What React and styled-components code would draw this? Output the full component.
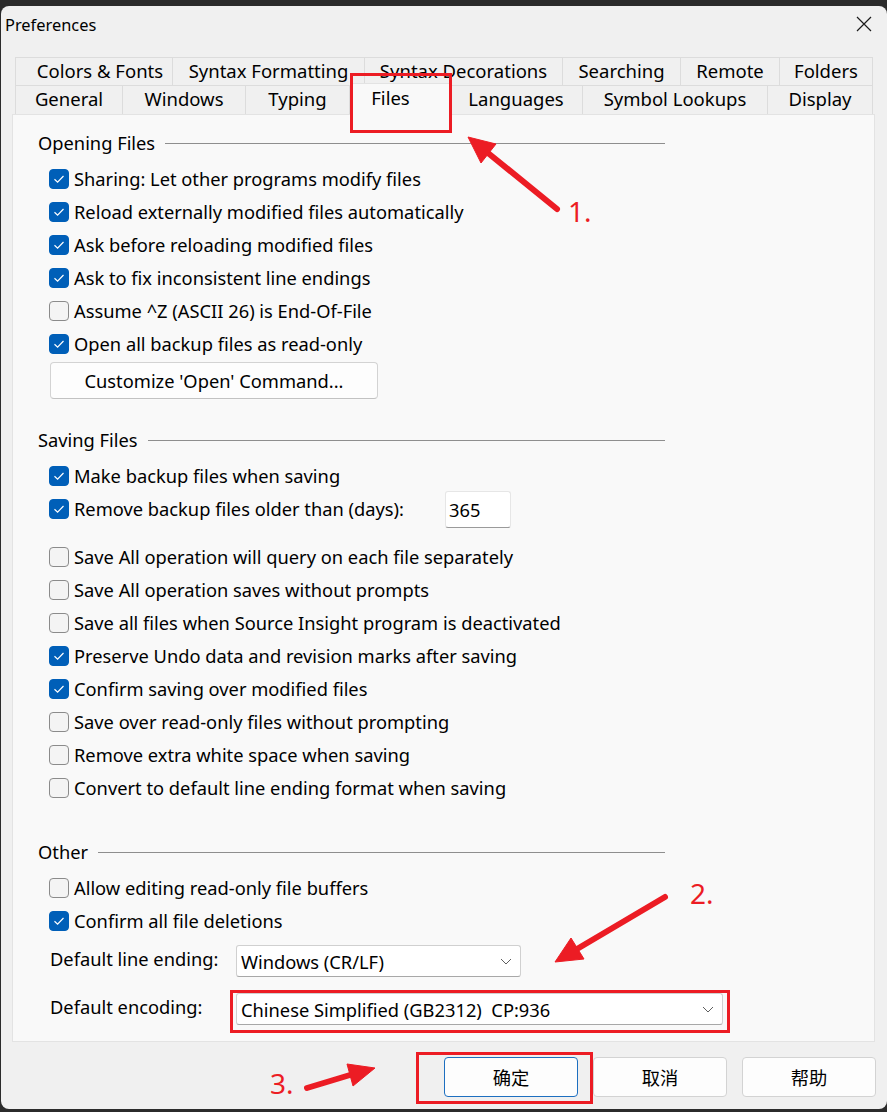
import React from "react";
import styled, { createGlobalStyle } from "styled-components";

const GlobalStyle = createGlobalStyle`
  * { box-sizing: border-box; }
  body, html { margin: 0; padding: 0; background: #2b2b2b; }
  body {
    font-family: "Noto Sans", "Noto Sans CJK SC", sans-serif;
    color: #000;
  }
`;

const Screen = styled.div`
  position: relative;
  width: 887px;
  height: 1112px;
  overflow: hidden;
  background: #2b2b2b;
`;

const Window = styled.div`
  margin: 6px 0 0 1px;
  width: 886px;
  height: 1103px;
  background: #f0f0f0;
  border-radius: 8px;
  display: flex;
  flex-direction: column;
`;

const TitleBar = styled.div`
  height: 36px;
  display: flex;
  align-items: center;
  justify-content: space-between;
  padding: 0 14px 0 4px;
  font-size: 16.4px;
`;

const CloseButton = styled.div`
  width: 18px;
  height: 18px;
  display: flex;
  align-items: center;
  justify-content: center;
`;

const Tabs = styled.div`
  margin: 15px 0 0 14px;
  width: 858px;
  display: flex;
  flex-direction: column;
`;

const TabRow = styled.div`
  display: flex;
  height: ${p => p.$h}px;
`;

const Tab = styled.div`
  width: ${p => p.$w}px;
  height: 100%;
  display: flex;
  align-items: center;
  justify-content: center;
  font-size: 18.5px;
  border: 1px solid #dcdcdc;
  border-bottom: none;
  border-left: ${p => (p.$first ? "1px solid #dcdcdc" : "none")};
  background: #f0f0f0;
  padding: 0 0 3px ${p => (p.$first && p.$indent ? 12 : 0)}px;
  white-space: nowrap;
`;

const ActiveTab = styled(Tab)`
  position: relative;
  z-index: 2;
  height: 32px;
  margin-top: -2px;
  align-items: flex-start;
  padding: 1px 18px 0 0;
  background: #f9f9f9;
  border-color: #e3e3e3;
`;

const Panel = styled.div`
  position: relative;
  z-index: 1;
  margin-left: 11px;
  width: 863px;
  height: 928px;
  background: #f9f9f9;
  border: 1px solid #e3e3e3;
  padding: 13px 0 0 25px;
  display: flex;
  flex-direction: column;
  font-size: 18.3px;
`;

const Section = styled.div`
  display: flex;
  flex-direction: column;
  margin-top: ${p => p.$top || 0}px;
`;

const Header = styled.div`
  width: 627px;
  height: 28px;
  display: flex;
  align-items: center;
  margin-bottom: 6px;
  white-space: nowrap;

  &::after {
    content: "";
    flex: 1;
    height: 1px;
    margin-left: 10px;
    margin-top: 2px;
    background: #8e8e8e;
  }
`;

const Row = styled.div`
  height: 33px;
  display: flex;
  align-items: center;
  padding-left: 11px;
`;

const Gap = styled.div`
  height: ${p => p.$h}px;
`;

const Box = styled.div`
  width: 20px;
  height: 20px;
  flex: none;
  border-radius: 4px;
  margin-right: 5px;
  margin-top: 1px;
  display: flex;
  align-items: center;
  justify-content: center;
  background: ${p => (p.$on ? "#005fb8" : "#f4f4f4")};
  border: 1px solid ${p => (p.$on ? "#005fb8" : "#8b8b8b")};
`;

const Label = styled.span`
  white-space: nowrap;
  width: ${p => (p.$w ? `${p.$w}px` : "auto")};
  flex: none;
`;

const NumberField = styled.div`
  width: 66px;
  height: 37px;
  background: #fff;
  border: 1px solid #e6e6e6;
  border-bottom-color: #9a9a9a;
  border-radius: 3px;
  display: flex;
  align-items: center;
  padding-left: 3px;
  margin-top: 2px;
`;

const PushButton = styled.div`
  margin: 2px 0 0 12px;
  width: 328px;
  height: 37px;
  background: #fdfdfd;
  border: 1px solid #d3d3d3;
  border-bottom-color: #c2c2c2;
  border-radius: 4px;
  display: flex;
  align-items: center;
  justify-content: center;
`;

const FormRow = styled.div`
  height: 48px;
  display: flex;
  align-items: center;
  padding-left: 12px;
`;

const FormLabel = styled.span`
  width: 186px;
  flex: none;
  margin-top: -5px;
  white-space: nowrap;
`;

const Select = styled.div`
  width: ${p => p.$w}px;
  height: 32px;
  background: #fff;
  border: 1px solid #d0d0d0;
  border-bottom-color: #a8a8a8;
  border-radius: 3px;
  display: flex;
  align-items: center;
  justify-content: space-between;
  padding: 0 8px 0 4px;
  white-space: nowrap;
`;

const Footer = styled.div`
  display: flex;
  justify-content: flex-end;
  gap: 15px;
  padding: 15px 11px 0 0;
`;

const DialogButton = styled.div`
  width: 134px;
  height: 40px;
  background: #fdfdfd;
  border: 1px solid ${p => (p.$default ? "#1d6fc0" : "#d3d3d3")};
  border-radius: 4px;
  display: flex;
  align-items: center;
  justify-content: center;
  font-family: "Noto Sans CJK SC", sans-serif;
  font-size: 18.3px;
`;

const Overlay = styled.svg`
  position: absolute;
  left: 0;
  top: 0;
  width: 887px;
  height: 1112px;
  pointer-events: none;
  z-index: 5;
`;

const Marker = styled.span`
  position: absolute;
  left: ${p => p.$x}px;
  top: ${p => p.$y}px;
  z-index: 6;
  color: #ec1c24;
  font-family: "Noto Sans", sans-serif;
  font-size: 28px;
  line-height: 1;
`;

const Check = () => (
  <svg width="12" height="10" viewBox="0 0 12 10">
    <path d="M1.5 5.2 L4.6 8.2 L10.5 2" fill="none" stroke="#fff" strokeWidth="1.2" />
  </svg>
);

const Chevron = () => (
  <svg width="12" height="7" viewBox="0 0 12 7">
    <path d="M1 1 L6 6 L11 1" fill="none" stroke="#5f5f5f" strokeWidth="1" />
  </svg>
);

const CheckRow = ({ on, children, labelWidth, extra }) => (
  <Row>
    <Box $on={on}>{on && <Check />}</Box>
    <Label $w={labelWidth}>{children}</Label>
    {extra}
  </Row>
);

const topTabs = [
  ["Colors & Fonts", 158],
  ["Syntax Formatting", 192],
  ["Syntax Decorations", 198],
  ["Searching", 118],
  ["Remote", 99],
  ["Folders", 93],
];

const bottomTabs = [
  ["General", 108],
  ["Windows", 123],
  ["Typing", 104],
  ["Files", 100, true],
  ["Languages", 133],
  ["Symbol Lookups", 185],
  ["Display", 105],
];

const opening = [
  ["Sharing: Let other programs modify files", true],
  ["Reload externally modified files automatically", true],
  ["Ask before reloading modified files", true],
  ["Ask to fix inconsistent line endings", true],
  ["Assume ^Z (ASCII 26) is End-Of-File", false],
  ["Open all backup files as read-only", true],
];

const saving = [
  ["Save All operation will query on each file separately", false],
  ["Save All operation saves without prompts", false],
  ["Save all files when Source Insight program is deactivated", false],
  ["Preserve Undo data and revision marks after saving", true],
  ["Confirm saving over modified files", true],
  ["Save over read-only files without prompting", false],
  ["Remove extra white space when saving", false],
  ["Convert to default line ending format when saving", false],
];

// arrow: tail point, where the shaft meets the head, and the head triangle
const arrows = [
  { tail: [557, 209], base: [488, 153], head: "468,137 481,163 496,144" },
  { tail: [665, 897], base: [577, 949], head: "555,962 584,959 571,938" },
  { tail: [307, 1088], base: [350, 1075], head: "375,1068 353,1086 347,1064" },
];

const boxes = [
  [351.5, 74.5, 99, 57],
  [231.5, 991.5, 497, 40],
  [417.5, 1053.5, 174, 49],
];

export default function App() {
  return (
    <>
      <GlobalStyle />
      <Screen>
        <Window>
          <TitleBar>
            <span>Preferences</span>
            <CloseButton>
              <svg width="16" height="16" viewBox="0 0 16 16">
                <path d="M1 1 L15 15 M15 1 L1 15" stroke="#1b1b1b" strokeWidth="1.2" />
              </svg>
            </CloseButton>
          </TitleBar>

          <Tabs>
            <TabRow $h={28}>
              {topTabs.map(([t, w], i) => (
                <Tab key={t} $w={w} $first={i === 0} $indent>{t}</Tab>
              ))}
            </TabRow>
            <TabRow $h={29}>
              {bottomTabs.map(([t, w, active], i) =>
                active ? (
                  <ActiveTab key={t} $w={w}>{t}</ActiveTab>
                ) : (
                  <Tab key={t} $w={w} $first={i === 0}>{t}</Tab>
                )
              )}
            </TabRow>
          </Tabs>

          <Panel>
            <Section>
              <Header>Opening Files</Header>
              {opening.map(([t, on]) => (
                <CheckRow key={t} on={on}>{t}</CheckRow>
              ))}
              <PushButton>Customize 'Open' Command...</PushButton>
            </Section>

            <Section $top={26}>
              <Header>Saving Files</Header>
              <CheckRow on>Make backup files when saving</CheckRow>
              <CheckRow on labelWidth={371} extra={<NumberField>365</NumberField>}>
                Remove backup files older than (days):
              </CheckRow>
              <Gap $h={15} />
              {saving.map(([t, on]) => (
                <CheckRow key={t} on={on}>{t}</CheckRow>
              ))}
            </Section>

            <Section $top={33}>
              <Header>Other</Header>
              <CheckRow on={false}>Allow editing read-only file buffers</CheckRow>
              <CheckRow on>Confirm all file deletions</CheckRow>
              <FormRow>
                <FormLabel>Default line ending:</FormLabel>
                <Select $w={285}>
                  <span>Windows (CR/LF)</span>
                  <Chevron />
                </Select>
              </FormRow>
              <FormRow>
                <FormLabel>Default encoding:</FormLabel>
                <Select $w={487}>
                  <span>Chinese Simplified (GB2312)&nbsp; CP:936</span>
                  <Chevron />
                </Select>
              </FormRow>
            </Section>
          </Panel>

          <Footer>
            <DialogButton $default>确定</DialogButton>
            <DialogButton>取消</DialogButton>
            <DialogButton>帮助</DialogButton>
          </Footer>
        </Window>

        <Overlay viewBox="0 0 887 1112">
          {boxes.map(([x, y, w, h], i) => (
            <rect key={i} x={x} y={y} width={w} height={h} fill="none" stroke="#ec1c24" strokeWidth="3" />
          ))}
          {arrows.map((a, i) => (
            <g key={i} fill="#ec1c24" stroke="#ec1c24">
              <line x1={a.tail[0]} y1={a.tail[1]} x2={a.base[0]} y2={a.base[1]} strokeWidth="6" strokeLinecap="round" />
              <polygon points={a.head} strokeWidth="1" strokeLinejoin="round" />
            </g>
          ))}
        </Overlay>
        <Marker $x={568} $y={197}>1.</Marker>
        <Marker $x={690} $y={879}>2.</Marker>
        <Marker $x={270} $y={1069}>3.</Marker>
      </Screen>
    </>
  );
}
